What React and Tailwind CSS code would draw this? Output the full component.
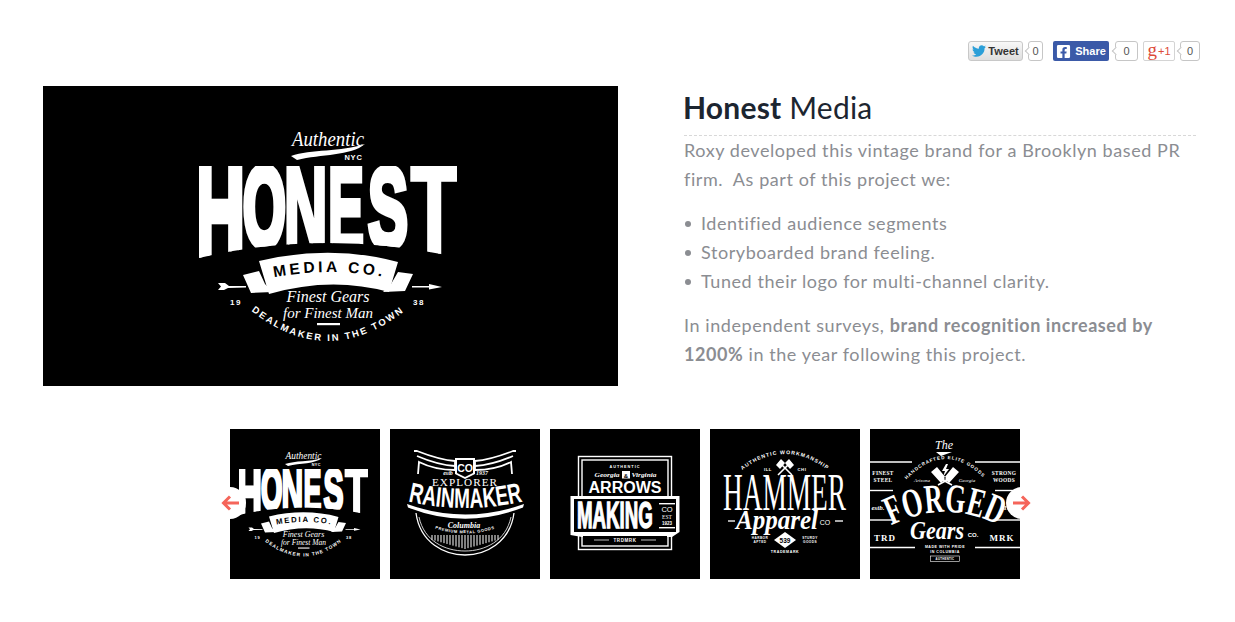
import { FaTwitter, FaFacebookSquare } from "react-icons/fa";

const SANS = "Liberation Sans, sans-serif";
const SERIF = "Liberation Serif, serif";

// small helper for white text in the logo drawings
function T({ x, y, s, w, f = SANS, b = true, i = false, ls, fill = "white", anchor = "middle", children }) {
  return (
    <text
      x={x}
      y={y}
      fontSize={s}
      fontFamily={f}
      fontWeight={b ? 700 : 400}
      fontStyle={i ? "italic" : "normal"}
      letterSpacing={ls}
      fill={fill}
      textAnchor={anchor}
      textLength={w}
      lengthAdjust={w ? "spacingAndGlyphs" : undefined}
    >
      {children}
    </text>
  );
}

function Tall({ x, y, sx, sy, f = SANS, sw = 0, children, fill = "white" }) {
  return (
    <text
      transform={`translate(${x} ${y}) scale(${sx} ${sy})`}
      fontSize="100"
      fontFamily={f}
      fontWeight="700"
      fill={fill}
      stroke={fill}
      strokeWidth={sw}
    >
      {children}
    </text>
  );
}

function Curve({ id, d, s, f = SANS, ls, w, i = false, b = true, children }) {
  return (
    <>
      <path id={id} d={d} fill="none" />
      <text fontSize={s} fontFamily={f} fontWeight={b ? 700 : 400} fontStyle={i ? "italic" : "normal"} letterSpacing={ls} fill="white" textAnchor="middle">
        <textPath href={`#${id}`} startOffset="50%" textLength={w} lengthAdjust={w ? "spacingAndGlyphs" : undefined}>
          {children}
        </textPath>
      </text>
    </>
  );
}

function HonestLogo({ prefix, className }) {
  return (
    <svg viewBox="0 0 300 300" className={className}>
      <T x={147} y={60} s={22} w={72} f={SERIF} b={false} i>Authentic</T>
      <path d="M110 70 C130 63 160 66 184 58 C170 70 140 68 116 74 Z" fill="white" />
      <T x={172.5} y={73.5} s={7.5} ls={0.8}>NYC</T>

      <clipPath id={`${prefix}-cut`}>
        <path d="M18 80 H276 V171 Q210 157 147 157 Q80 157 18 172 Z" />
      </clipPath>
      <g clipPath={`url(#${prefix}-cut)`}>
        <Tall x={14} y={176} sx={0.69} sy={1.42} sw={6}>H</Tall>
        <Tall x={62} y={160} sx={0.55} sy={1.14} sw={7}>O</Tall>
        <Tall x={103} y={164} sx={0.6} sy={1.2} sw={5}>N</Tall>
        <Tall x={147} y={164} sx={0.54} sy={1.2} sw={5}>E</Tall>
        <Tall x={187} y={161} sx={0.6} sy={1.14} sw={6}>S</Tall>
        <Tall x={230} y={176} sx={0.76} sy={1.42} sw={4}>T</Tall>
      </g>

      <path d="M62 189 L78 185 L84 198 L92 206 L70 207 Z M232 188 L217 186 L210 198 L202 206 L224 205 Z" fill="white" />
      <path d="M78 175 Q150 158 217 176 L208 206 Q150 190 88 208 Z" fill="white" />
      <Curve id={`${prefix}-media`} d="M80 194 Q150 178 217 194" s={15.5} ls={3.4}>
        <tspan fill="#000">MEDIA CO.</tspan>
      </Curve>
      <path d="M37 197 H44 L48 200 H65 V201.5 L47 202 L43 204 H37 L40 200.5 Z" fill="white" />
      <path d="M231 200 H248 V198 L261 201 L248 203.5 V201.5 H231 Z" fill="white" />
      <T x={55} y={219} s={8} ls={1.5}>19</T>
      <T x={238} y={219} s={8} ls={1.5}>38</T>
      <T x={147} y={216} s={17} w={83} f={SERIF} b={false} i>Finest Gears</T>
      <T x={147} y={232} s={15} w={90} f={SERIF} b={false} i>for Finest Man</T>
      <rect x={136} y={237} width={23} height={2.2} fill="white" />
      <Curve id={`${prefix}-deal`} d="M62 218 Q147 292 232 218" s={9.5} ls={2}>DEALMAKER IN THE TOWN</Curve>
    </svg>
  );
}

function RainmakerLogo() {
  return (
    <svg viewBox="0 0 150 150" className="w-full h-full">
      <g fill="none" stroke="white" strokeWidth="1.8">
        <path d="M24 22 L27 22 Q50 31 65 32 V41 Q45 41 29 33 L28 45" />
        <path d="M126 22 L123 22 Q100 31 85 32 V41 Q105 41 121 33 L122 45" />
        <path d="M27 27 Q48 36 65 37 M123 27 Q102 36 85 37" />
      </g>
      <path d="M65 29 H85 V45 L75 50 L65 45 Z" fill="white" />
      <path d="M67 31 H83 V44 L75 48 L67 44 Z" fill="black" />
      <T x={75} y={43} s={10.5}>CO</T>
      <T x={58} y={46} s={6} f={SERIF} i>estb</T>
      <T x={92} y={46} s={6} f={SERIF} i>1937</T>
      <T x={75} y={57} s={11} w={66} f={SERIF} b={false} ls={1}>EXPLORER</T>
      <Curve id="rain" d="M16 72 Q75 86 135 72" s={28} w={116} f={SANS}>RAINMAKER</Curve>
      <path d="M17 75 Q75 96 134 75 L133 78.5 Q75 101 18 78.5 Z" fill="white" />
      <path d="M26 84 C30 114 55 126 75 126 C95 126 120 114 124 84" fill="none" stroke="white" strokeWidth="1.3" />
      <path d="M29 88 C34 112 55 122 75 122 C95 122 116 112 121 88" fill="none" stroke="white" strokeWidth="0.8" />
      <T x={74} y={99} s={8} f={SERIF} i>Columbia</T>
      <Curve id="prem" d="M38 97 Q75 112 112 97" s={4} ls={0.6}>PREMIUM METAL GOODS</Curve>
      <g stroke="white" strokeWidth="1">
        {[42, 45, 48, 51, 54, 57, 60, 63, 66, 69, 72, 75, 78, 81, 84, 87, 90, 93, 96, 99, 102, 105, 108].map((x) => (
          <line key={x} x1={x} y1={106} x2={x} y2={120 - Math.abs(x - 75) * 0.28} />
        ))}
      </g>
    </svg>
  );
}

function ArrowsLogo() {
  return (
    <svg viewBox="0 0 150 150" className="w-full h-full">
      <rect x="28.5" y="27.5" width="93" height="93" fill="none" stroke="white" strokeWidth="1.4" />
      <rect x="32" y="31" width="86" height="86" fill="none" stroke="white" strokeWidth="1.4" />
      <path d="M20.5 67 H129.5 V103 L122 108 H32 L20.5 106 Z" fill="white" />
      <rect x="24" y="70" width="102" height="33" fill="black" />
      <rect x="33" y="107" width="84" height="9" fill="black" />
      <T x={75} y={39} s={3.8} ls={1}>AUTHENTIC</T>
      <T x={57} y={48} s={7} w={25} f={SERIF} i>Georgia</T>
      <rect x="72" y="42" width="8" height="7.5" fill="white" />
      <T x={76} y={48.5} s={6} fill="black">&amp;</T>
      <T x={94} y={48} s={7} w={25} f={SERIF} i>Virginia</T>
      <T x={75} y={64} s={16} w={73}>ARROWS</T>
      <Tall x={27} y={99} sx={0.187} sy={0.37} sw={4}>MAKING</Tall>
      <rect x="109" y="74" width="16" height="1.4" fill="white" />
      <T x={117} y={83} s={7.5} b={false}>CO</T>
      <T x={117} y={90} s={5.5} f={SERIF} b={false}>EST</T>
      <T x={117} y={96} s={4.5}>1923</T>
      <rect x="109" y="98" width="16" height="1.4" fill="white" />
      <rect x="44" y="110.5" width="15" height="1" fill="#bbb" />
      <rect x="91" y="110.5" width="15" height="1" fill="#bbb" />
      <T x={75} y={113} s={4.5} ls={0.6}>TRDMRK</T>
    </svg>
  );
}

function HammerLogo() {
  return (
    <svg viewBox="0 0 150 150" className="w-full h-full">
      <Curve id="work" d="M31 42 Q75 8 119 42" s={5.2} ls={1}>AUTHENTIC WORKMANSHIP</Curve>
      <T x={58} y={42} s={4.2} ls={0.6}>ILL</T>
      <T x={92} y={42} s={4.2} ls={0.6}>CHI</T>
      <g stroke="white" strokeWidth="1.6">
        <line x1="68" y1="46" x2="81" y2="33" />
        <line x1="82" y1="46" x2="69" y2="33" />
      </g>
      <path d="M66 36 L71 30 L75 34 L70 40 Z M84 36 L79 30 L75 34 L80 40 Z" fill="white" />
      <T x={74.5} y={81} s={52} w={123} f={SERIF} b={false}>HAMMER</T>
      <rect x="18" y="91" width="7" height="2" fill="#aaa" />
      <rect x="125" y="91" width="8" height="2" fill="#aaa" />
      <T x={67} y={100} s={27} w={82} f={SERIF} i>Apparel</T>
      <T x={115} y={96} s={7} b={false}>CO</T>
      <path d="M64 111 L75 103 L86 111 L75 119 Z" fill="white" />
      <T x={75} y={113.5} s={6.5} fill="black">539</T>
      <T x={50} y={109.5} s={3.2} ls={0.4}>HARBOR</T>
      <T x={50} y={114} s={3.2} ls={0.4}>APTED</T>
      <T x={100} y={109.5} s={3.2} ls={0.4}>STURDY</T>
      <T x={100} y={114} s={3.2} ls={0.4}>GOODS</T>
      <T x={75} y={124} s={3.6} ls={0.6}>TRADEMARK</T>
    </svg>
  );
}

function ForgedLogo() {
  return (
    <svg viewBox="0 0 150 150" className="w-full h-full">
      <T x={74} y={20} s={12} f={SERIF} b={false} i>The</T>
      <path d="M66 23 H82 L71 27 Z" fill="white" />
      <Curve id="hand" d="M30 58 Q75 3 120 56" s={4.6} ls={0.9}>HANDCRAFTED ELITE GOODS</Curve>
      <g stroke="white" strokeWidth="1.4">
        <line x1="0" y1="33" x2="42" y2="33" />
        <line x1="105" y1="33" x2="150" y2="33" />
        <line x1="0" y1="61.5" x2="23" y2="61.5" />
        <line x1="125" y1="61.5" x2="150" y2="61.5" />
        <line x1="0" y1="91" x2="23" y2="91" />
        <line x1="125" y1="91" x2="150" y2="91" />
        <line x1="0" y1="118.5" x2="45" y2="118.5" />
        <line x1="105" y1="118.5" x2="150" y2="118.5" />
      </g>
      <T x={13} y={46} s={5.4} f={SERIF} ls={0.3}>FINEST</T>
      <T x={13} y={53} s={5.4} f={SERIF} ls={0.3}>STEEL</T>
      <T x={134} y={46} s={5.4} f={SERIF} ls={0.3}>STRONG</T>
      <T x={134} y={53} s={5.4} f={SERIF} ls={0.3}>WOODS</T>
      <path d="M61 43 L67 38 L76 49 L71 54 Z M89 43 L83 38 L74 49 L79 54 Z" fill="white" />
      <g stroke="white" strokeWidth="1.6">
        <line x1="71" y1="50" x2="82" y2="56" />
        <line x1="79" y1="50" x2="68" y2="56" />
      </g>
      <path d="M76 35 L72 42 H75 L73 48 L79 40 H76 L78 35 Z" fill="white" />
      <T x={52} y={53} s={5} f={SERIF} i b={false}>Arizona</T>
      <T x={97} y={53} s={5} f={SERIF} i b={false}>Georgia</T>
      <T x={8} y={81} s={7} f={SERIF} i>estb.</T>
      <T x={137} y={81} s={7} f={SERIF} i>19</T>
      <Curve id="forged" d="M18 98 Q75 68 132 98" s={41} w={112} f={SERIF}>FORGED</Curve>
      <T x={67} y={110} s={26} w={54} f={SERIF} i>Gears</T>
      <T x={103} y={108} s={6}>CO.</T>
      <T x={15} y={111.5} s={9} f={SERIF} ls={1}>TRD</T>
      <T x={132} y={111.5} s={9} f={SERIF} ls={1}>MRK</T>
      <T x={75} y={118.5} s={3.6} ls={0.5}>MADE WITH PRIDE</T>
      <T x={75} y={123.5} s={3.6} ls={0.5}>IN COLUMBIA</T>
      <rect x="60.5" y="127" width="29" height="5.5" fill="none" stroke="white" strokeWidth="0.6" />
      <T x={75} y={131} s={2.8} ls={0.3}>AUTHENTIC</T>
    </svg>
  );
}

function Count({ value, className }) {
  return (
    <div className={`relative ml-[5px] h-5 flex items-center justify-center bg-white border border-[#c6c6c6] rounded-[3px] text-[11px] text-[#555] ${className}`}>
      <span className="absolute -left-[3px] top-[6px] w-[6px] h-[6px] rotate-45 bg-white border-l border-b border-[#c6c6c6]" />
      <span className="relative">{value}</span>
    </div>
  );
}

function ShareBar() {
  return (
    <div className="flex justify-end pr-[35px] h-5 font-['Liberation_Sans',sans-serif]">
      <div className="w-[55px] h-5 flex items-center justify-center gap-[2px] rounded-[3px] border border-[#c8c8c8] bg-gradient-to-b from-[#f8f8f8] to-[#dedede] text-[11px] font-bold text-[#333]">
        <FaTwitter className="text-[14px] text-[#2b9fd8]" />
        Tweet
      </div>
      <Count value="0" className="w-[15px]" />
      <div className="ml-[10px] w-[56px] h-5 flex items-center justify-center gap-[4px] rounded-[2px] bg-[#3b5aa8] text-[11px] font-bold text-white">
        <FaFacebookSquare className="text-[15px] text-white" />
        Share
      </div>
      <Count value="0" className="ml-[6px] w-[23px] border-[#9aa3bd]" />
      <div className="ml-[5px] w-[32px] h-5 flex items-center justify-center gap-[1px] rounded-[2px] border border-[#d4d4d4] bg-white text-[#dd4b39]">
        <span className="font-['Liberation_Serif',serif] text-[19px] leading-none -mt-[4px]">g</span>
        <span className="text-[11px]">+1</span>
      </div>
      <Count value="0" className="w-[20px]" />
    </div>
  );
}

function Thumb({ children }) {
  return <div className="w-[150px] h-[150px] bg-black shrink-0 overflow-hidden">{children}</div>;
}

function ArrowButton({ side }) {
  const left = side === "left";
  return (
    <div className={`absolute top-[58px] w-8 h-8 rounded-full bg-white flex items-center justify-center ${left ? "-left-[16px]" : "-right-[18px]"}`}>
      <svg viewBox="0 0 18 16" className="w-[18px] h-4" fill="none" stroke="#f5655a" strokeWidth="3">
        {left ? <path d="M18 8 H2 M9 1.5 L2.5 8 L9 14.5" /> : <path d="M0 8 H16 M9 1.5 L15.5 8 L9 14.5" />}
      </svg>
    </div>
  );
}

function Bullet({ children }) {
  return (
    <li className="flex items-center">
      <span className="w-[6px] h-[6px] rounded-full bg-[#8b8d92] ml-px mr-[10px] shrink-0" />
      {children}
    </li>
  );
}

export default function App() {
  return (
    <div className="w-[1235px] h-[622px] bg-white overflow-hidden pt-[41px]">
      <ShareBar />

      <div className="flex mt-[25px] pl-[43px]">
        <div className="w-[575px] h-[300px] bg-black flex justify-center shrink-0">
          <HonestLogo prefix="main" className="w-[300px] h-[300px]" />
        </div>

        <div className="ml-[66px] w-[512px] font-['Lato',sans-serif] text-[18px] leading-[29px] text-[#8b8d92] tracking-[0.57px]">
          <h1 className="h-[50px] pt-[3px] text-[30px] leading-[36px] tracking-[0.2px] text-[#1c2530] border-b border-dashed border-[#d8d8d8]">
            <span className="font-bold -ml-px">Honest</span> Media
          </h1>
          <p>
            Roxy developed this vintage brand for a Brooklyn based PR firm.&nbsp; As part of this project we:
          </p>
          <ul className="mt-[15px]">
            <Bullet>Identified audience segments</Bullet>
            <Bullet>Storyboarded brand feeling.</Bullet>
            <Bullet>Tuned their logo for multi-channel clarity.</Bullet>
          </ul>
          <p className="mt-[15px]">
            In independent surveys, <strong className="font-bold">brand recognition increased by 1200%</strong> in the year following this project.
          </p>
        </div>
      </div>

      <div className="relative ml-[230px] mt-[43px] w-[790px] flex gap-[10px]">
        <Thumb>
          <HonestLogo prefix="thumb" className="w-full h-full" />
        </Thumb>
        <Thumb>
          <RainmakerLogo />
        </Thumb>
        <Thumb>
          <ArrowsLogo />
        </Thumb>
        <Thumb>
          <HammerLogo />
        </Thumb>
        <Thumb>
          <ForgedLogo />
        </Thumb>
        <ArrowButton side="left" />
        <ArrowButton side="right" />
      </div>
    </div>
  );
}
